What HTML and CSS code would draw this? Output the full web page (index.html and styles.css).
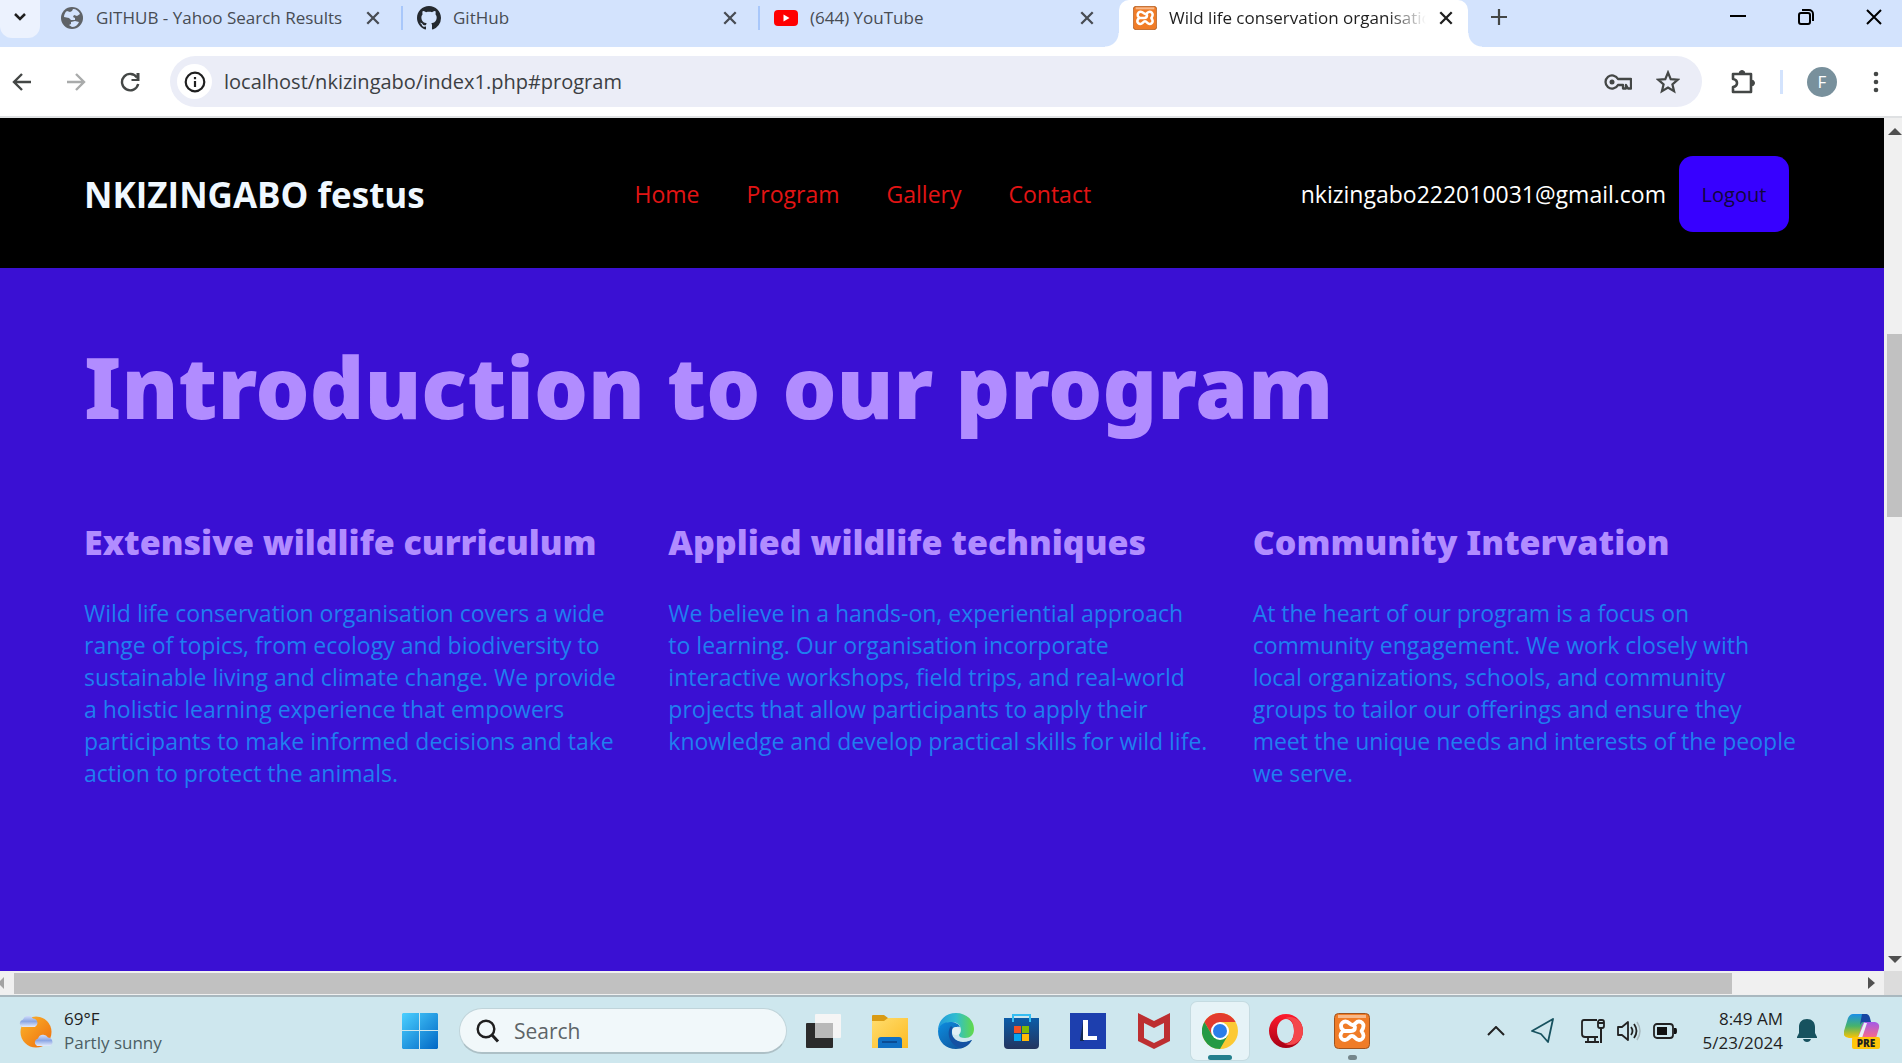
FILE: index.html
```html
<!DOCTYPE html>
<html lang="en">
<head>
<meta charset="utf-8">
<title>Wild life conservation organisation</title>
<link rel="stylesheet" href="styles.css">
</head>
<body>
<svg class="defs" aria-hidden="true">
  <symbol id="x" viewBox="0 0 14 14"><path d="M2 2l10 10M12 2L2 12" fill="none" stroke="currentColor" stroke-width="2"/></symbol>
  <symbol id="xampp" viewBox="0 0 36 36">
    <rect x=".5" y=".5" width="35" height="35" rx="4" fill="#f07c27" stroke="#9e5420"/>
    <path d="M4 2h28v3H4z" fill="#f7b98b"/>
    <path d="M17 18h-4c-4 0-6-2-6-5 0-2.500 2-4.500 4.500-4.500 4 0 4 3.500 7 3.500s3-3.500 6.500-3.500c2.500 0 4.500 2 4.500 4.500 0 2-1 3.500-2 5 1 1.500 2 3 2 4.500 0 2.500-2 4.500-4.500 4.500-3.500 0-4-4-7-4s-3.500 4-7 4c-2.500 0-4.500-2-4.500-4.500 0-1.500 1-3 2.500-4.500M17 18c3 0 4-1.500 4-4" fill="none" stroke="#fff" stroke-width="3.800" stroke-linecap="round" stroke-linejoin="round"/>
  </symbol>
</svg>

<header class="browser">
  <div class="tabs">
    <button class="tab-search" aria-label="Search tabs"><svg width="14" height="10" viewBox="0 0 14 10"><path d="M2 2l5 5 5-5" fill="none" stroke="#1f1f1f" stroke-width="2.500"/></svg></button>
    <div class="tab">
      <svg class="fav" viewBox="0 0 24 24"><circle cx="12" cy="12" r="11" fill="#5f6368"/><path d="M13 3c3 0 6 2 7 5l-3 2-3-1-1 2 2 1v2h-4l-2-2-5-1c0-2 1-5 3-6l3 1 2-1zM11 16l4-1 4 1c-1 3-4 5-7 5l-3-2 2-1z" fill="#d3e3fd"/></svg>
      <span class="tab-title">GITHUB - Yahoo Search Results</span>
      <button class="close" aria-label="Close tab"><svg><use href="#x"/></svg></button>
    </div>
    <div class="tab">
      <svg class="fav" viewBox="0 0 16 16"><path fill="#24292f" d="M8 0C3.580 0 0 3.580 0 8c0 3.540 2.290 6.530 5.470 7.590.4.070.55-.17.55-.38 0-.19-.01-.82-.01-1.490-2.010.37-2.530-.49-2.690-.94-.09-.23-.48-.94-.82-1.130-.28-.15-.68-.52-.01-.53.63-.01 1.080.58 1.230.82.72 1.210 1.870.87 2.330.66.070-.52.28-.87.51-1.070-1.780-.2-3.640-.89-3.640-3.950 0-.87.31-1.590.82-2.150-.08-.2-.36-1.020.080-2.120 0 0 .67-.21 2.200.82.640-.18 1.320-.27 2-.27s1.360.090 2 .27c1.530-1.040 2.200-.82 2.200-.82.440 1.100.160 1.920.080 2.120.51.56.82 1.270.82 2.150 0 3.070-1.870 3.750-3.650 3.950.29.25.54.73.54 1.480 0 1.070-.01 1.930-.01 2.200 0 .21.150.46.55.38A8.010 8.010 0 0 0 16 8c0-4.420-3.580-8-8-8z"/></svg>
      <span class="tab-title">GitHub</span>
      <button class="close" aria-label="Close tab"><svg><use href="#x"/></svg></button>
    </div>
    <div class="tab">
      <svg class="fav" viewBox="0 0 24 24"><rect y="4" width="24" height="16" rx="4" fill="#f00"/><path d="M9.500 8.500v7l6-3.500z" fill="#fff"/></svg>
      <span class="tab-title">(644) YouTube</span>
      <button class="close" aria-label="Close tab"><svg><use href="#x"/></svg></button>
    </div>
    <div class="tab active">
      <svg class="fav"><use href="#xampp"/></svg>
      <span class="tab-title">Wild life conservation organisation</span>
      <button class="close" aria-label="Close tab"><svg><use href="#x"/></svg></button>
    </div>
    <button class="new-tab" aria-label="New tab"><svg width="16" height="16" viewBox="0 0 16 16"><path d="M8 0v16M0 8h16" stroke="#444746" stroke-width="2.200"/></svg></button>
    <div class="window-buttons">
      <button aria-label="Minimize"><svg width="16" height="16" viewBox="0 0 16 16"><path d="M0 7h16" stroke="#000" stroke-width="2"/></svg></button>
      <button aria-label="Restore"><svg width="16" height="16" viewBox="0 0 16 16"><rect x="1" y="4" width="11" height="11" rx="2" fill="none" stroke="#000" stroke-width="2"/><path d="M4 1h7a4 4 0 0 1 4 4v7" fill="none" stroke="#000" stroke-width="2"/></svg></button>
      <button aria-label="Close"><svg width="16" height="16" viewBox="0 0 16 16"><path d="M1 1l14 14M15 1L1 15" stroke="#000" stroke-width="2"/></svg></button>
    </div>
  </div>
  <div class="toolbar">
    <div class="history">
      <button aria-label="Back"><svg width="20" height="20" viewBox="0 0 20 20"><path d="M19 10H2M10 2l-8 8 8 8" fill="none" stroke="#444746" stroke-width="2.400"/></svg></button>
      <button aria-label="Forward"><svg width="20" height="20" viewBox="0 0 20 20"><path d="M1 10h17M10 2l8 8-8 8" fill="none" stroke="#a9abab" stroke-width="2.400"/></svg></button>
      <button aria-label="Reload"><svg width="20" height="20" viewBox="0 0 20 20"><path d="M17 5.500A8.200 8.200 0 1 0 18.200 12" fill="none" stroke="#444746" stroke-width="2.400"/><path d="M19.500 1v8h-8V7h5V1z" fill="#444746"/></svg></button>
    </div>
    <div class="omnibox">
      <button class="info" aria-label="Site information"><svg width="22" height="22" viewBox="0 0 22 22"><circle cx="11" cy="11" r="9.300" fill="none" stroke="#1f1f1f" stroke-width="2.200"/><path d="M11 10v6M11 6v2.300" stroke="#1f1f1f" stroke-width="2.200"/></svg></button>
      <input class="url" type="text" aria-label="Address" value="localhost/nkizingabo/index1.php#program">
      <button aria-label="Passwords"><svg width="28" height="20" viewBox="0 0 28 20"><path d="M14 7A6.600 6.600 0 1 0 14 13h5v3.500h3V13l2 3.500h3V7z" fill="none" stroke="#444746" stroke-width="2.300" stroke-linejoin="round"/><circle cx="8" cy="10" r="2.500" fill="#444746"/></svg></button>
      <button aria-label="Bookmark"><svg width="24" height="24" viewBox="0 0 24 24"><path d="M12 2.500l2.700 6.600 7.100.6-5.400 4.600 1.700 7L12 17.600l-6.100 3.700 1.700-7-5.400-4.600 7.100-.6z" fill="none" stroke="#444746" stroke-width="2.200"/></svg></button>
    </div>
    <button class="extensions" aria-label="Extensions"><svg width="26" height="26" viewBox="0 0 26 26"><path d="M3 5h18v18H3v-5c3-.5 4-2 4-4s-1-3.500-4-4z" fill="none" stroke="#444746" stroke-width="2.600" stroke-linejoin="round"/><path d="M9 5a3 3.500 0 0 1 6 0zM21 11a3.500 3 0 0 1 0 6z" fill="#444746" stroke="#444746"/></svg></button>
    <span class="divider"></span>
    <button class="avatar" aria-label="Profile">F</button>
    <button class="menu" aria-label="Menu"><svg width="6" height="22" viewBox="0 0 6 22"><g fill="#444746"><circle cx="3" cy="3" r="2.300"/><circle cx="3" cy="11" r="2.300"/><circle cx="3" cy="19" r="2.300"/></g></svg></button>
  </div>
</header>

<div class="viewport">
  <div class="page">
    <nav class="site-nav">
      <a class="brand" href="#home">NKIZINGABO festus</a>
      <div class="links"><a href="#home">Home</a><a href="#program">Program</a><a href="#gallery">Gallery</a><a href="#contact">Contact</a></div>
      <div class="account"><span>nkizingabo222010031@gmail.com</span><button class="logout">Logout</button></div>
    </nav>
    <main class="program" id="program">
      <h1>Introduction to our program</h1>
      <div class="columns">
        <section><h2>Extensive wildlife curriculum</h2><p>Wild life conservation organisation covers a wide<br>range of topics, from ecology and biodiversity to<br>sustainable living and climate change. We provide<br>a holistic learning experience that empowers<br>participants to make informed decisions and take<br>action to protect the animals.</p></section>
        <section><h2>Applied wildlife techniques</h2><p>We believe in a hands-on, experiential approach<br>to learning. Our organisation incorporate<br>interactive workshops, field trips, and real-world<br>projects that allow participants to apply their<br>knowledge and develop practical skills for wild life.</p></section>
        <section><h2>Community Intervation</h2><p>At the heart of our program is a focus on<br>community engagement. We work closely with<br>local organizations, schools, and community<br>groups to tailor our offerings and ensure they<br>meet the unique needs and interests of the people<br>we serve.</p></section>
      </div>
    </main>
  </div>
  <div class="vbar"><svg width="14" height="7" viewBox="0 0 14 7"><path d="M0 7l7-7 7 7z" fill="#505050"/></svg><span class="vthumb"></span><svg width="14" height="7" viewBox="0 0 14 7"><path d="M0 0l7 7 7-7z" fill="#505050"/></svg></div>
  <div class="hbar"><svg width="4" height="12" viewBox="0 0 4 12"><path d="M4 0v12L0 8V4z" fill="#a3a3a3"/></svg><span class="hthumb"></span><svg width="7" height="12" viewBox="0 0 7 12"><path d="M0 0v12l7-6z" fill="#505050"/></svg></div>
  <div class="corner"></div>
</div>

<footer class="taskbar">
  <div class="weather">
    <svg width="36" height="36" viewBox="0 0 36 36"><defs><linearGradient id="sun" x2="1" y2="1"><stop stop-color="#fbb62b"/><stop offset="1" stop-color="#ee6c0c"/></linearGradient><linearGradient id="cloud" x2="0" y2="1"><stop stop-color="#d3dffb"/><stop offset=".5" stop-color="#8aa5e4"/><stop offset="1" stop-color="#e4ecfc"/></linearGradient></defs><circle cx="18" cy="19" r="15.500" fill="url(#sun)"/><path d="M4 14a4 4 0 0 1 1-7.500 5.500 5.500 0 0 1 10-1A4.500 4.500 0 0 1 17 14z" fill="url(#cloud)"/><path d="M19 33a4 4 0 0 1 1-7.500 5.500 5.500 0 0 1 10-1A4.500 4.500 0 0 1 32 33z" fill="url(#cloud)"/></svg>
    <div><div>69°F</div><div class="muted">Partly sunny</div></div>
  </div>
  <div class="apps">
    <button class="start" aria-label="Start"><svg width="36" height="36" viewBox="0 0 36 36"><defs><linearGradient id="win" gradientUnits="userSpaceOnUse" x1="0" y1="0" x2="36" y2="36"><stop stop-color="#4cd0ff"/><stop offset="1" stop-color="#0067c5"/></linearGradient></defs><path d="M1 0h16v17H0V1zM18 0h17l1 1v16H18zM0 18h17v18H1l-1-1zM18 18h18v17l-1 1H18z" fill="url(#win)"/></svg></button>
    <label class="search"><svg width="24" height="24" viewBox="0 0 24 24"><circle cx="10" cy="10" r="8.300" fill="none" stroke="#1f1f1f" stroke-width="2.400"/><path d="M16 16l6 6.500" stroke="#1f1f1f" stroke-width="3"/></svg><input type="search" placeholder="Search" aria-label="Search"></label>
    <button class="app" aria-label="Task view"><svg width="36" height="36" viewBox="0 0 36 36"><rect y="10" width="27" height="25" rx="1" fill="#2b2b2b"/><rect x="9" y="1" width="26" height="24" rx="1" fill="#f5f5f5"/><path d="M9 10h18v15H9z" fill="#b9b9b9"/></svg></button>
    <button class="app" aria-label="File Explorer"><svg width="36" height="36" viewBox="0 0 36 36"><defs><linearGradient id="fold" x2="1" y2="1"><stop stop-color="#ffdd6e"/><stop offset="1" stop-color="#fdbb22"/></linearGradient></defs><path d="M0 3q0-1 1-1h11l4 3h19q1 0 1 1v4H0z" fill="#d99b14"/><path d="M0 8h12l4-3h20v30H0z" fill="url(#fold)"/><path d="M6 35v-8q0-3 3-3h18q3 0 3 3v8z" fill="#1070c4"/><path d="M10 29h15" stroke="#0a4c94" stroke-width="2"/></svg></button>
    <button class="app" aria-label="Edge"><svg width="36" height="36" viewBox="0 0 36 36"><defs><linearGradient id="e1" x2="1"><stop stop-color="#2199dd"/><stop offset=".5" stop-color="#30bdd0"/><stop offset="1" stop-color="#62da46"/></linearGradient><linearGradient id="e2" x2="1" y2="1"><stop stop-color="#0c8de0"/><stop offset="1" stop-color="#114a8f"/></linearGradient></defs><path d="M0 18C0 7 8 0 18 0c11 0 18 8 18 16 0 6-4 9-9 9-4 0-6-1-6-3 0-1 2-2 2-5 0-5-4-8-9-8C7 9 1 13 0 18z" fill="url(#e1)"/><path d="M0 18C1 12 6 9 12 9c5 0 9 2 10 5-4-1-8 2-8 6 0 5 5 9 11 9 5 0 8-2 9-2-3 6-9 9-16 9C8 36 0 29 0 18z" fill="url(#e2)"/><path d="M13 13c-5 6-2 19 9 22 5-1 9-4 12-8-3 2-8 3-12 2-7-2-11-9-7-14z" fill="#1551a2"/><circle cx="18" cy="18" r="4" fill="#e0f0f5"/></svg></button>
    <button class="app" aria-label="Store"><svg width="36" height="36" viewBox="0 0 36 36"><defs><linearGradient id="st" x2="0" y2="1"><stop stop-color="#0b5ca8"/><stop offset="1" stop-color="#23355f"/></linearGradient></defs><path d="M9 8V2h17v6" fill="none" stroke="#35bdf2" stroke-width="2"/><path d="M0 5h35v27q0 4-4 4H4q-4 0-4-4z" fill="url(#st)"/><path d="M9 5v4M26 5v4" stroke="#35bdf2" stroke-width="2"/><path d="M10 13h7v7h-7z" fill="#f05125"/><path d="M18 13h7v7h-7z" fill="#80bb03"/><path d="M10 21h7v7h-7z" fill="#05a6f0"/><path d="M18 21h7v7h-7z" fill="#ffba08"/></svg></button>
    <button class="app" aria-label="L"><svg width="36" height="36" viewBox="0 0 36 36"><path d="M0 0h36v36H0z" fill="#1d3fae"/><path d="M13 8l-3 20 4 0z" fill="#12294f"/><path d="M13 7h5v16h9v4H13z" fill="#fff"/></svg></button>
    <button class="app" aria-label="McAfee"><svg width="36" height="36" viewBox="0 0 36 36"><path d="M2 0l16 8 16-8v28l-16 8-16-8zM8 10v15l10 5 10-5V10l-10 5z" fill="#bd2f31" fill-rule="evenodd"/></svg></button>
    <button class="app current" aria-label="Chrome"><svg width="36" height="36" viewBox="0 0 36 36"><circle cx="18" cy="18" r="18" fill="#fcc934"/><path d="M18 9h15.600A18 18 0 0 0 2.400 9l7.800 13.500z" fill="#e33b2e"/><path d="M25.800 22.500L18 36A18 18 0 0 1 2.400 9l7.800 13.500z" fill="#249a45"/><circle cx="18" cy="18" r="9" fill="#fff"/><circle cx="18" cy="18" r="7" fill="#2b7de9"/></svg></button>
    <button class="app" aria-label="Opera"><svg width="36" height="36" viewBox="0 0 36 36"><defs><linearGradient id="op" x2="0" y2="1"><stop stop-color="#ff1b2d"/><stop offset="1" stop-color="#a70014"/></linearGradient></defs><path d="M18 1a17 17 0 1 0 0 34 17 17 0 1 0 0-34zM18 6c5 0 8 5 8 12s-3 12-8 12-9-5-9-12 4-12 9-12z" fill="url(#op)" fill-rule="evenodd"/><path d="M16 6c9-3 10 8 10 12 0 8-4 14-10 12 5 5 19 1 19-12S22 1 16 6z" fill="#f4474b"/></svg></button>
    <button class="app running" aria-label="XAMPP"><svg width="36" height="36"><use href="#xampp"/></svg></button>
  </div>
  <div class="tray">
    <button class="more" aria-label="Hidden icons"><svg width="18" height="10" viewBox="0 0 18 10"><path d="M1 9l8-8 8 8" fill="none" stroke="#222" stroke-width="2"/></svg></button>
    <svg class="plane" width="24" height="26" viewBox="0 0 24 26"><path d="M22 1L1 13l9 3 7 8z" fill="none" stroke="#17525f" stroke-width="1.800" stroke-linejoin="round"/></svg>
    <svg width="24" height="26" viewBox="0 0 24 26"><path d="M16 2H3Q1 2 1 4v12q0 3 3 3h13M7 19v5M14 19v5M4 24h14" fill="none" stroke="#222" stroke-width="1.800"/><rect x="17" y="2" width="6" height="8" rx="2" fill="none" stroke="#222" stroke-width="1.800"/><path d="M17 5h6M20 10v15" stroke="#222" stroke-width="2"/></svg>
    <svg width="24" height="22" viewBox="0 0 24 22"><path d="M1 7h4l6-5v18l-6-5H1z" fill="none" stroke="#222" stroke-width="1.800" stroke-linejoin="round"/><path d="M14 7q3 4 0 8M17 4q5 7 0 14" fill="none" stroke="#222" stroke-width="1.800"/><path d="M20 2q6 9 0 18" fill="none" stroke="#a9b9be" stroke-width="1.500"/></svg>
    <svg width="24" height="16" viewBox="0 0 24 16"><rect x="1" y="1" width="19" height="14" rx="3" fill="none" stroke="#222" stroke-width="1.800"/><path d="M4 4h10v8H4zM21 5h2q1 0 1 3t-1 3h-2z" fill="#111"/></svg>
    <div class="clock"><div>8:49 AM</div><div>5/23/2024</div></div>
    <svg class="bell" width="20" height="24" viewBox="0 0 20 24"><path d="M10 0c5 0 8 3 8 8v6l2 4v1H0v-1l2-4V8c0-5 3-8 8-8zM6 20h8q-1 3-4 3t-4-3z" fill="#17525f"/></svg>
    <svg class="copilot" width="36" height="36" viewBox="0 0 36 36"><defs><linearGradient id="c1" x2="0" y2="1"><stop stop-color="#1a8fe8"/><stop offset=".5" stop-color="#46b36c"/><stop offset="1" stop-color="#ffc400"/></linearGradient><linearGradient id="c2" x2="0" y2="1"><stop stop-color="#a35ae8"/><stop offset="1" stop-color="#fb6a86"/></linearGradient></defs><path d="M9 1h14l-8 22q-1 2-4 2H5q-7-1-5-7l4-13q2-4 5-4z" fill="url(#c1)"/><path d="M18 1h4q3 0 4 4l1 4h-8q-2 0-3 3z" fill="#1746a2"/><path d="M26 9h5q5 1 4 6l-3 10H14l4-13q1-3 4-3z" fill="url(#c2)"/><path d="M20 10h3l-5 15h-4z" fill="#e8f3f5"/><rect x="8" y="24" width="28" height="12" rx="2" fill="#ffc60a"/><text x="22" y="34" text-anchor="middle" class="pre">PRE</text></svg>
  </div>
</footer>
</body>
</html>
```
FILE: styles.css
```css
* { box-sizing: border-box; }
body {
  margin: 0;
  height: 100vh;
  display: flex;
  flex-direction: column;
  overflow: hidden;
  font-family: "Open Sans", "Noto Sans", sans-serif;
  color: #1f1f1f;
}
button {
  display: flex;
  align-items: center;
  justify-content: center;
  padding: 0;
  border: 0;
  background: none;
  font: inherit;
  color: inherit;
}
input { border: 0; outline: 0; background: none; font: inherit; min-width: 0; padding: 0; }
svg { display: block; flex: none; }
a { color: inherit; text-decoration: none; }
.defs { position: absolute; width: 0; height: 0; }

/* Tab strip */
.tabs { display: flex; height: 47px; background: #d3e3fd; }
.tab-search { width: 40px; height: 38px; padding-bottom: 4px; border-radius: 0 0 12px 12px; background: #ecf2fe; margin-right: 4px; }
.tab { display: flex; align-items: center; flex: 0 1 357px; min-width: 0; height: 36px; padding: 0 20px 0 16px; gap: 12px; font-size: 17px; color: #474c53; }
.tab + .tab:not(.active) { background: linear-gradient(#a8c7fa, #a8c7fa) 0 6px / 2px 24px no-repeat; }
.tab.active {
  flex-basis: 349px;
  height: 47px;
  margin-left: 4px;
  padding: 0 14px 11px;
  background: #fff;
  color: #1f1f1f;
  position: relative;
  border-radius: 10px 10px 0 0;
}
.tab.active::before, .tab.active::after { content: ""; position: absolute; bottom: 0; width: 14px; height: 14px; }
.tab.active::before { right: 100%; background: radial-gradient(circle at 0 0, transparent 13px, #fff 14px); }
.tab.active::after { left: 100%; background: radial-gradient(circle at 100% 0, transparent 13px, #fff 14px); }
.tab-title { flex: 1; overflow: hidden; white-space: nowrap; line-height: 28px; }
.active .tab-title { -webkit-mask-image: linear-gradient(90deg, #000 85%, transparent); mask-image: linear-gradient(90deg, #000 85%, transparent); }
.fav { width: 24px; height: 24px; }
.close svg { width: 16px; height: 16px; }
.new-tab { width: 62px; height: 34px; }
.window-buttons { display: flex; gap: 12px; margin-left: auto; height: 34px; }
.window-buttons button { width: 56px; }

/* Toolbar */
.toolbar { display: flex; align-items: center; height: 71px; background: #fff; border-bottom: 2px solid #dfe1e3; }
.history { display: flex; width: 170px; padding-left: 12px; gap: 34px; }
.omnibox { flex: 1; display: flex; align-items: center; gap: 24px; height: 51px; border-radius: 26px; padding: 0 22px 0 7px; background: #ebedf7; }
.info { width: 35px; height: 35px; border-radius: 50%; background: #fff; }
.url { flex: 1; margin-left: -12px; font-size: 20px; color: #3c3f43; }
.extensions { margin-left: 28px; }
.divider { width: 3px; height: 24px; margin: 0 24px; background: #d3e3fd; }
.avatar { width: 30px; height: 30px; border-radius: 50%; background: #78909c; color: #fff; font-size: 17px; }
.menu { margin: 0 23px 0 36px; }

/* Browser viewport and scrollbars */
.viewport { flex: 1; min-height: 0; display: grid; grid-template: minmax(0, 1fr) 24px / minmax(0, 1fr) 18px; }
.page { overflow: hidden; background: #3a10d3; }
.vbar { display: flex; flex-direction: column; align-items: center; justify-content: space-between; padding: 10px 0 8px 3px; overflow: hidden; background: #f0f0f0; }
.vthumb { width: 16px; flex: 0 1 22%; margin-bottom: 240px; background: #c1c1c1; }
.hbar { display: flex; align-items: center; padding: 2px 9px 2px 0; background: #f0f0f0; }
.hthumb { flex: 0 0 1718px; flex-basis: 91.6%; height: 21px; margin: 0 auto 0 10px; background: #c1c1c1; }
.corner { background: #dcdcdc; }

/* Site */
.site-nav { display: grid; grid-template-columns: auto auto auto; justify-content: space-between; align-items: center; height: 150px; padding: 2px 95px 0 84px; background: #000; font-size: 23px; }
.brand { font-size: 35px; font-weight: 700; color: #f0f8ff; }
.links { display: flex; gap: 47px; color: #e21414; }
.account { display: flex; align-items: center; gap: 13px; color: #fff; }
.logout { width: 110px; height: 76px; border-radius: 14px; background: #3700ff; color: #12063d; font-size: 20px; }
.program { padding: 62px 95px 0 84px; }
h1, h2 { margin: 0; font-family: "Noto Sans", "Open Sans", sans-serif; font-weight: 900; color: #b18cff; }
h1 { font-size: 85px; line-height: 112px; }
.columns { display: grid; grid-template-columns: repeat(3, minmax(0, 1fr)); gap: 48px; margin-top: 76px; }
h2 { font-size: 34px; line-height: 48px; white-space: nowrap; }
p { margin: 31px 0 0; font-size: 23px; line-height: 32px; white-space: nowrap; color: #1f7ff0; }

/* Taskbar */
.taskbar { display: flex; align-items: center; height: 68px; padding-top: 2px; border-top: 2px solid #a9b8bf; background: #cee7ee; font-size: 17px; line-height: 24px; }
.weather { display: flex; gap: 10px; width: 402px; padding-left: 18px; align-items: center; }
.muted { color: #4c5e64; }
.apps { display: flex; align-items: center; }
.search { display: flex; align-items: center; gap: 14px; width: 328px; height: 46px; margin: 0 8px 0 21px; padding-left: 16px; border: 1px solid #c0d4da; border-bottom: 2px solid #adc0c6; border-radius: 23px; background: #f1f8fa; }
.search input { flex: 1; font-size: 21px; }
.search input::placeholder { color: #5d6467; opacity: 1; }
.app { position: relative; width: 58px; height: 58px; margin-right: 8px; border-radius: 6px; }
.current { background: #e6f3f7; box-shadow: 0 0 0 1px #c5dbe1; }
.current::after, .running::after { content: ""; position: absolute; bottom: 0; width: 24px; height: 5px; border-radius: 3px; background: #237f8d; }
.running::after { width: 9px; background: #75868b; }
.tray { display: flex; align-items: center; margin-left: auto; padding-right: 22px; gap: 12px; }
.more, .plane { margin-right: 14px; }
.clock { width: 94px; text-align: right; white-space: nowrap; }
.bell { margin-left: 2px; }
.copilot { margin-left: 15px; }
.pre { font: 800 10px "Open Sans", sans-serif; fill: #1f1f1f; }
```
